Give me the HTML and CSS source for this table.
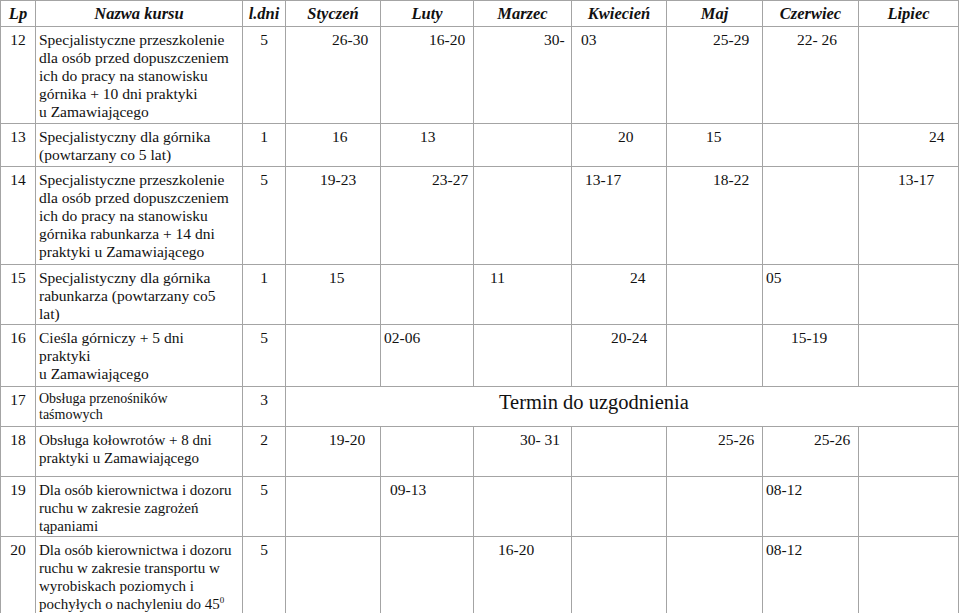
FILE: index.html
```html
<!DOCTYPE html>
<html lang="pl">
<head>
<meta charset="utf-8">
<title>Harmonogram kursów</title>
<link rel="stylesheet" href="styles.css">
</head>
<body>
<table class="plan">
  <colgroup>
    <col class="w-lp"><col class="w-name"><col class="w-days">
    <col class="w-sty"><col class="w-lut"><col class="w-mar"><col class="w-kwi">
    <col class="w-maj"><col class="w-cze"><col class="w-lip">
  </colgroup>
  <thead>
    <tr class="head">
      <th>Lp</th><th>Nazwa kursu</th><th>l.dni</th><th>Styczeń</th><th>Luty</th>
      <th>Marzec</th><th>Kwiecień</th><th>Maj</th><th>Czerwiec</th><th>Lipiec</th>
    </tr>
  </thead>
  <tbody>
    <tr class="h97">
      <td class="lp">12</td>
      <td class="name">Specjalistyczne przeszkolenie<br>dla osób przed dopuszczeniem<br>ich do pracy na stanowisku<br>górnika + 10 dni praktyki<br>u Zamawiającego</td>
      <td class="days">5</td>
      <td class="o46">26-30</td><td class="o48">16-20</td><td class="o70">30-</td><td class="o8">03</td>
      <td class="o46">25-29</td><td class="o34">22- 26</td><td></td>
    </tr>
    <tr class="h43">
      <td class="lp">13</td>
      <td class="name">Specjalistyczny dla górnika<br>(powtarzany co 5 lat)</td>
      <td class="days">1</td>
      <td class="o46">16</td><td class="o39">13</td><td></td><td class="o46">20</td>
      <td class="o39">15</td><td></td><td class="o70">24</td>
    </tr>
    <tr class="h98">
      <td class="lp">14</td>
      <td class="name">Specjalistyczne przeszkolenie<br>dla osób przed dopuszczeniem<br>ich do pracy na stanowisku<br>górnika rabunkarza + 14 dni<br>praktyki u Zamawiającego</td>
      <td class="days">5</td>
      <td class="o34">19-23</td><td class="o51">23-27</td><td></td><td class="o13">13-17</td>
      <td class="o46">18-22</td><td></td><td class="o39">13-17</td>
    </tr>
    <tr class="h60">
      <td class="lp">15</td>
      <td class="name">Specjalistyczny dla górnika<br>rabunkarza (powtarzany co5<br>lat)</td>
      <td class="days">1</td>
      <td class="o43">15</td><td></td><td class="o16">11</td><td class="o58">24</td>
      <td></td><td class="o3">05</td><td></td>
    </tr>
    <tr class="h62">
      <td class="lp">16</td>
      <td class="name">Cieśla górniczy + 5 dni<br>praktyki<br>u Zamawiającego</td>
      <td class="days">5</td>
      <td></td><td class="o3">02-06</td><td></td><td class="o39">20-24</td>
      <td></td><td class="o28">15-19</td><td></td>
    </tr>
    <tr class="h40">
      <td class="lp">17</td>
      <td class="name small">Obsługa przenośników<br>taśmowych</td>
      <td class="days">3</td>
      <td class="agreed" colspan="7">Termin do uzgodnienia</td>
    </tr>
    <tr class="h50">
      <td class="lp">18</td>
      <td class="name mid">Obsługa kołowrotów + 8 dni<br>praktyki u Zamawiającego</td>
      <td class="days">2</td>
      <td class="o43">19-20</td><td></td><td class="o46">30- 31</td><td></td>
      <td class="o51">25-26</td><td class="o51">25-26</td><td></td>
    </tr>
    <tr class="h60">
      <td class="lp">19</td>
      <td class="name mid">Dla osób kierownictwa i dozoru<br>ruchu w zakresie zagrożeń<br>tąpaniami</td>
      <td class="days">5</td>
      <td></td><td class="o8">09-13</td><td></td><td></td>
      <td></td><td class="o3">08-12</td><td></td>
    </tr>
    <tr class="h76">
      <td class="lp">20</td>
      <td class="name mid">Dla osób kierownictwa i dozoru<br>ruchu w zakresie transportu w<br>wyrobiskach poziomych i<br>pochyłych o nachyleniu do 45<sup>0</sup></td>
      <td class="days">5</td>
      <td></td><td></td><td class="o24">16-20</td><td></td>
      <td></td><td class="o3">08-12</td><td></td>
    </tr>
  </tbody>
</table>
</body>
</html>
```

FILE: styles.css
```css
html, body {
  margin: 0;
  padding: 0;
  background: #ffffff;
}

body {
  font-family: "Liberation Serif", "Times New Roman", serif;
  color: #111111;
}

.plan {
  border-collapse: collapse;
  table-layout: fixed;
  width: 959px;
  font-family: "Liberation Serif", "Times New Roman", serif;
  font-size: 15.5px;
  line-height: 18px;
}

.w-lp { width: 35px; }
.w-name { width: 207px; }
.w-days { width: 43px; }
.w-sty { width: 95px; }
.w-lut { width: 93px; }
.w-mar { width: 98px; }
.w-kwi { width: 95px; }
.w-maj { width: 96px; }
.w-cze { width: 96px; }
.w-lip { width: 100px; }

.plan th,
.plan td {
  border: 1px solid #a4a4a4;
  padding: 4px 0 0 0;
  vertical-align: top;
  text-align: left;
  white-space: nowrap;
  overflow: hidden;
}

.plan th {
  font-weight: bold;
  font-style: italic;
  font-size: 16.5px;
  text-align: center;
  vertical-align: middle;
  padding: 0;
}

.head { height: 26px; }
.h97 { height: 97px; }
.h43 { height: 43px; }
.h98 { height: 98px; }
.h60 { height: 60px; }
.h62 { height: 62px; }
.h40 { height: 40px; }
.h50 { height: 50px; }
.h76 { height: 76px; }

.plan .lp { text-align: center; }
.plan .days { text-align: center; }
.plan .name { padding-left: 3px; }

.plan .small {
  font-size: 14px;
  line-height: 16px;
}

.plan .mid {
  font-size: 15px;
}

.plan .agreed {
  font-size: 20.5px;
  padding-top: 6px;
  padding-left: 213px;
}

sup {
  font-size: 9px;
  line-height: 0;
  vertical-align: 6px;
}

.plan .o3 { padding-left: 3px; }
.plan .o8 { padding-left: 9px; }
.plan .o13 { padding-left: 13px; }
.plan .o16 { padding-left: 16px; }
.plan .o24 { padding-left: 24px; }
.plan .o28 { padding-left: 28px; }
.plan .o34 { padding-left: 34px; }
.plan .o39 { padding-left: 39px; }
.plan .o43 { padding-left: 43px; }
.plan .o46 { padding-left: 46px; }
.plan .o48 { padding-left: 48px; }
.plan .o51 { padding-left: 51px; }
.plan .o58 { padding-left: 58px; }
.plan .o70 { padding-left: 70px; }
```
